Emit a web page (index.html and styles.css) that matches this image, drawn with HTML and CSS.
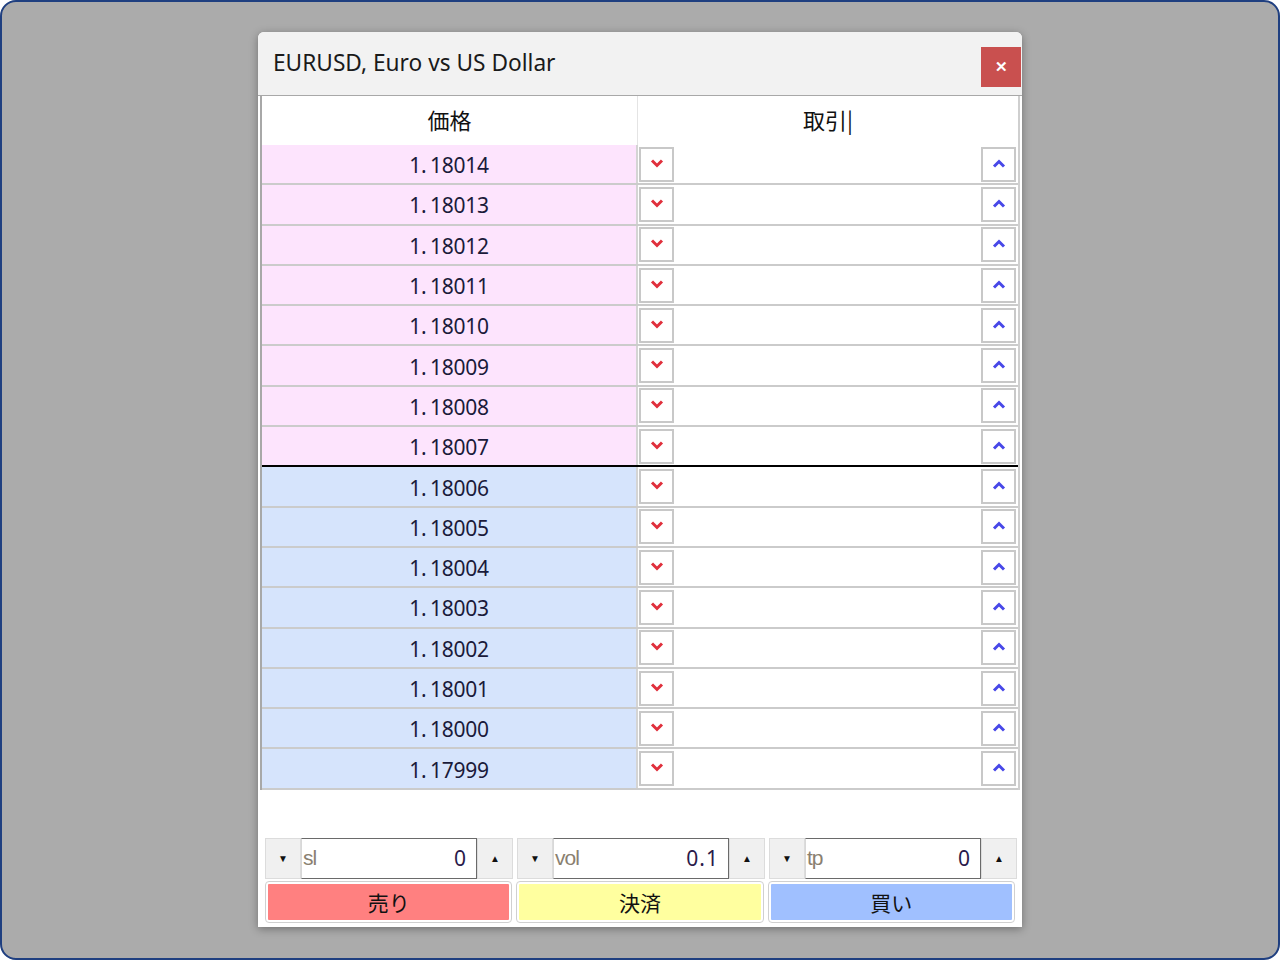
FILE: index.html
```html
<!DOCTYPE html>
<html lang="ja">
<head>
  <meta charset="UTF-8" />
  <title>EURUSD</title>
  <link rel="stylesheet" href="styles.css">
</head>
<body>
  <div class="frame">
    <div class="window">
      <div class="titlebar">
        <span class="title">EURUSD, Euro vs US Dollar</span>
        <button class="close">✕</button>
      </div>
      <div class="panel">
        <div class="ladder">
          <div class="row head">
            <div class="price">価格</div>
            <div class="trade-head">取引|</div>
          </div>
          <div id="rows"></div>
        </div>
        <div class="blank"></div>
        <div class="spins">
          <div class="spin">
            <button class="arrow">&#9660;</button>
            <div class="field"><span class="lbl">sl</span><span class="val">0</span></div>
            <button class="arrow">&#9650;</button>
          </div>
          <div class="spin">
            <button class="arrow">&#9660;</button>
            <div class="field"><span class="lbl">vol</span><span class="val">0.1</span></div>
            <button class="arrow">&#9650;</button>
          </div>
          <div class="spin">
            <button class="arrow">&#9660;</button>
            <div class="field"><span class="lbl">tp</span><span class="val">0</span></div>
            <button class="arrow">&#9650;</button>
          </div>
        </div>
        <div class="actions">
          <button class="act sell">売り</button>
          <button class="act close-pos">決済</button>
          <button class="act buy">買い</button>
        </div>
      </div>
    </div>
  </div>

  <script>
    const prices = ["1.18014","1.18013","1.18012","1.18011","1.18010","1.18009","1.18008","1.18007",
                    "1.18006","1.18005","1.18004","1.18003","1.18002","1.18001","1.18000","1.17999"];
    const down = '<svg width="14" height="9" viewBox="0 0 14 9"><path d="M2 1.5 L7 6.5 L12 1.5" fill="none" stroke="#e0303c" stroke-width="3"/></svg>';
    const up = '<svg width="14" height="9" viewBox="0 0 14 9"><path d="M2 7.5 L7 2.5 L12 7.5" fill="none" stroke="#4848e8" stroke-width="3"/></svg>';

    // "1." gets its own span so the dot keeps a full-width cell like the original font
    const html = prices.map((p, i) => `
      <div class="row ${i < 8 ? 'ask' : 'bid'}${i === 7 ? ' mid' : ''}">
        <div class="price">${p.slice(0, 1)}<span class="dot">.</span>${p.slice(2)}</div>
        <div class="trade">
          <button class="step dn">${down}</button>
          <button class="step up">${up}</button>
        </div>
      </div>
    `).join("");
    document.getElementById("rows").innerHTML = html;
  </script>
</body>
</html>
```

FILE: styles.css
```css
html, body { margin: 0; padding: 0; }
body { width: 1280px; height: 960px; overflow: hidden; font-family: "Noto Sans", sans-serif; }
.frame { box-sizing: border-box; width: 1280px; height: 960px; background: #ababab; border: 2px solid #1f3f80; border-radius: 16px; padding: 30px 0 0 256px; }

.window { width: 764px; height: 895px; background: #fff; border-radius: 6px 6px 0 0; box-shadow: 0 2px 8px rgba(0,0,0,0.35); overflow: hidden; }
.titlebar { height: 63px; background: #f2f2f2; display: flex; align-items: center; justify-content: space-between; }
.title { padding-left: 15px; font-size: 22.7px; color: #1a1a1a; margin-top: -2px; }
.close { width: 40px; height: 40px; margin-right: 1px; margin-top: 7px; border: none; background: #c9504f; color: #fff; font-size: 15px; font-weight: bold; cursor: pointer; padding: 0; }

.panel { border-top: 1px solid #a8a8a8; height: 831px; display: flex; flex-direction: column; }
.ladder { margin: 0 2px; border-left: 2px solid #a8a8a8; border-right: 2px solid #cfcfcf; }

.row { display: grid; grid-template-columns: 376px 1fr; height: 40.3px; box-sizing: border-box; border-bottom: 2px solid #cbcbcb; }
.row .price { display: flex; align-items: center; justify-content: center; border-right: 2px solid #d4d4d4; font-family: "Noto Sans", sans-serif; font-variant-numeric: tabular-nums; font-size: 21px; letter-spacing: -0.3px; color: #1a1a3a; padding-top: 2px; }
.dot { display: inline-block; width: 9px; }
.row.head { height: 49px; border-bottom: none; }
.row.head .price, .trade-head { font-family: "Noto Sans CJK JP", sans-serif; font-size: 22px; letter-spacing: 0; color: #111; display: flex; align-items: center; justify-content: center; padding-top: 0; margin-top: -4px; }
.row.head .price { border-right: 1px solid #e4e4e4; margin-top: 0; padding-bottom: 4px; }
.ask .price { background: #fde4fd; }
.bid .price { background: #d6e4fc; }
.row.mid { border-bottom: 2px solid #000; }

.trade { display: flex; justify-content: space-between; align-items: center; padding: 0 2px 0 1px; }
.step { width: 35px; height: 35px; box-sizing: border-box; border: 2px solid #c8c8c8; background: #fff; padding: 0; display: flex; align-items: flex-start; justify-content: center; padding-top: 10px; cursor: pointer; }

.blank { height: 48px; }
.spins { display: flex; gap: 4px; padding: 0 5px 0 7px; height: 41px; }
.spin { flex: 1; display: flex; }
.arrow { width: 36px; border: 1px solid #dcdcdc; background: #f0f0f0; font-size: 10px; color: #111; padding: 0; cursor: pointer; }
.field { flex: 1; display: flex; align-items: center; justify-content: space-between; border: 1px solid #6a6a6a; border-left-color: #d8d8d8; background: #fff; padding: 0 9px 0 1px; font-family: "Liberation Sans", sans-serif; font-size: 21px; }
.lbl { color: #8a8070; letter-spacing: -1px; }
.val { color: #2a1a4a; font-family: "Noto Sans", sans-serif; font-variant-numeric: tabular-nums; font-size: 21px; letter-spacing: 1px; }

.actions { display: flex; gap: 6px; padding: 3px 8px 0 8px; height: 40px; }
.act { flex: 1; border: 2px solid #fff; outline: 1px solid #d0d0d0; border-radius: 3px; font-family: "Noto Sans CJK JP", sans-serif; font-size: 21px; color: #111; padding: 0; cursor: pointer; }
.sell { background: #ff8080; }
.close-pos { background: #ffff9f; }
.buy { background: #a0c0ff; }
```
